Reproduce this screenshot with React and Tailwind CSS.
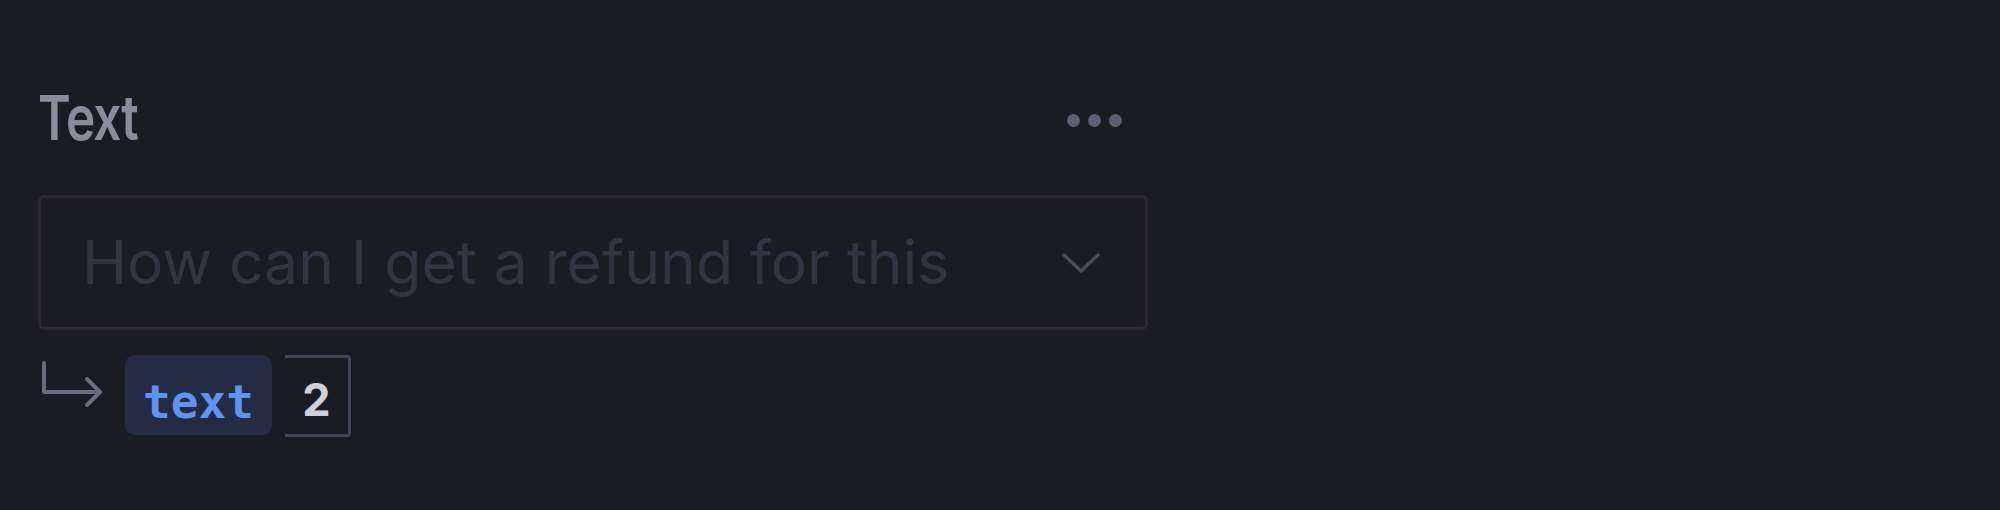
export default function App() {
  return (
    <div className="w-[2000px] h-[510px] bg-[#1b1b24] pl-[38px] pt-[86px]" style={{ fontFamily: 'Inter, "Noto Sans", sans-serif' }}>
      <div className="w-[1110px]">
        <div className="flex items-start justify-between h-[63px]">
          <span className="inline-block origin-left scale-x-[0.8] text-[62px] leading-[63px] font-semibold tracking-[-0.02em] text-[#898c9a]">Text</span>
          <div className="flex items-center gap-[8px] mr-[26px] pt-[28px]">
            <span className="w-[13px] h-[13px] rounded-full bg-[#5c5f71]" />
            <span className="w-[13px] h-[13px] rounded-full bg-[#5c5f71]" />
            <span className="w-[13px] h-[13px] rounded-full bg-[#5c5f71]" />
          </div>
        </div>
        <div className="mt-[46px] h-[135px] rounded-[6px] border-[3px] border-[#2c2830] flex items-center justify-between pl-[41px] pr-[44px]">
          <span className="text-[60.6px] text-[#333441] leading-none">How can I get a refund for this</span>
          <svg width="40" height="24" viewBox="0 0 40 24" fill="none">
            <path d="M3 4 L20 20 L37 4" stroke="#4a4c5b" strokeWidth="3.5" strokeLinecap="round" strokeLinejoin="round" />
          </svg>
        </div>
        <div className="mt-[25px] flex items-start h-[82px]">
          <svg width="66" height="56" viewBox="0 0 66 56" fill="none" className="ml-[2px] mt-[6px]">
            <path d="M4 2 V31 H60 M47 18 L60 31 L47 44" stroke="#6a6c7c" strokeWidth="4" strokeLinecap="round" strokeLinejoin="round" />
          </svg>
          <div className="ml-[19px] h-[80px] w-[147px] rounded-[10px] bg-[#242c44] flex justify-center pt-[24px]">
            <span className="text-[46px] font-bold text-[#5d94f0] leading-none" style={{ fontFamily: '"DejaVu Sans Mono", "Liberation Mono", monospace' }}>text</span>
          </div>
          <div className="ml-[13px] h-[82px] w-[66px] border-y-[3px] border-r-[3px] border-[#43445a] rounded-r-[4px] flex justify-center pt-[19px]">
            <span className="text-[45px] font-bold text-[#d0d1d8] leading-none">2</span>
          </div>
        </div>
      </div>
    </div>
  );
}
